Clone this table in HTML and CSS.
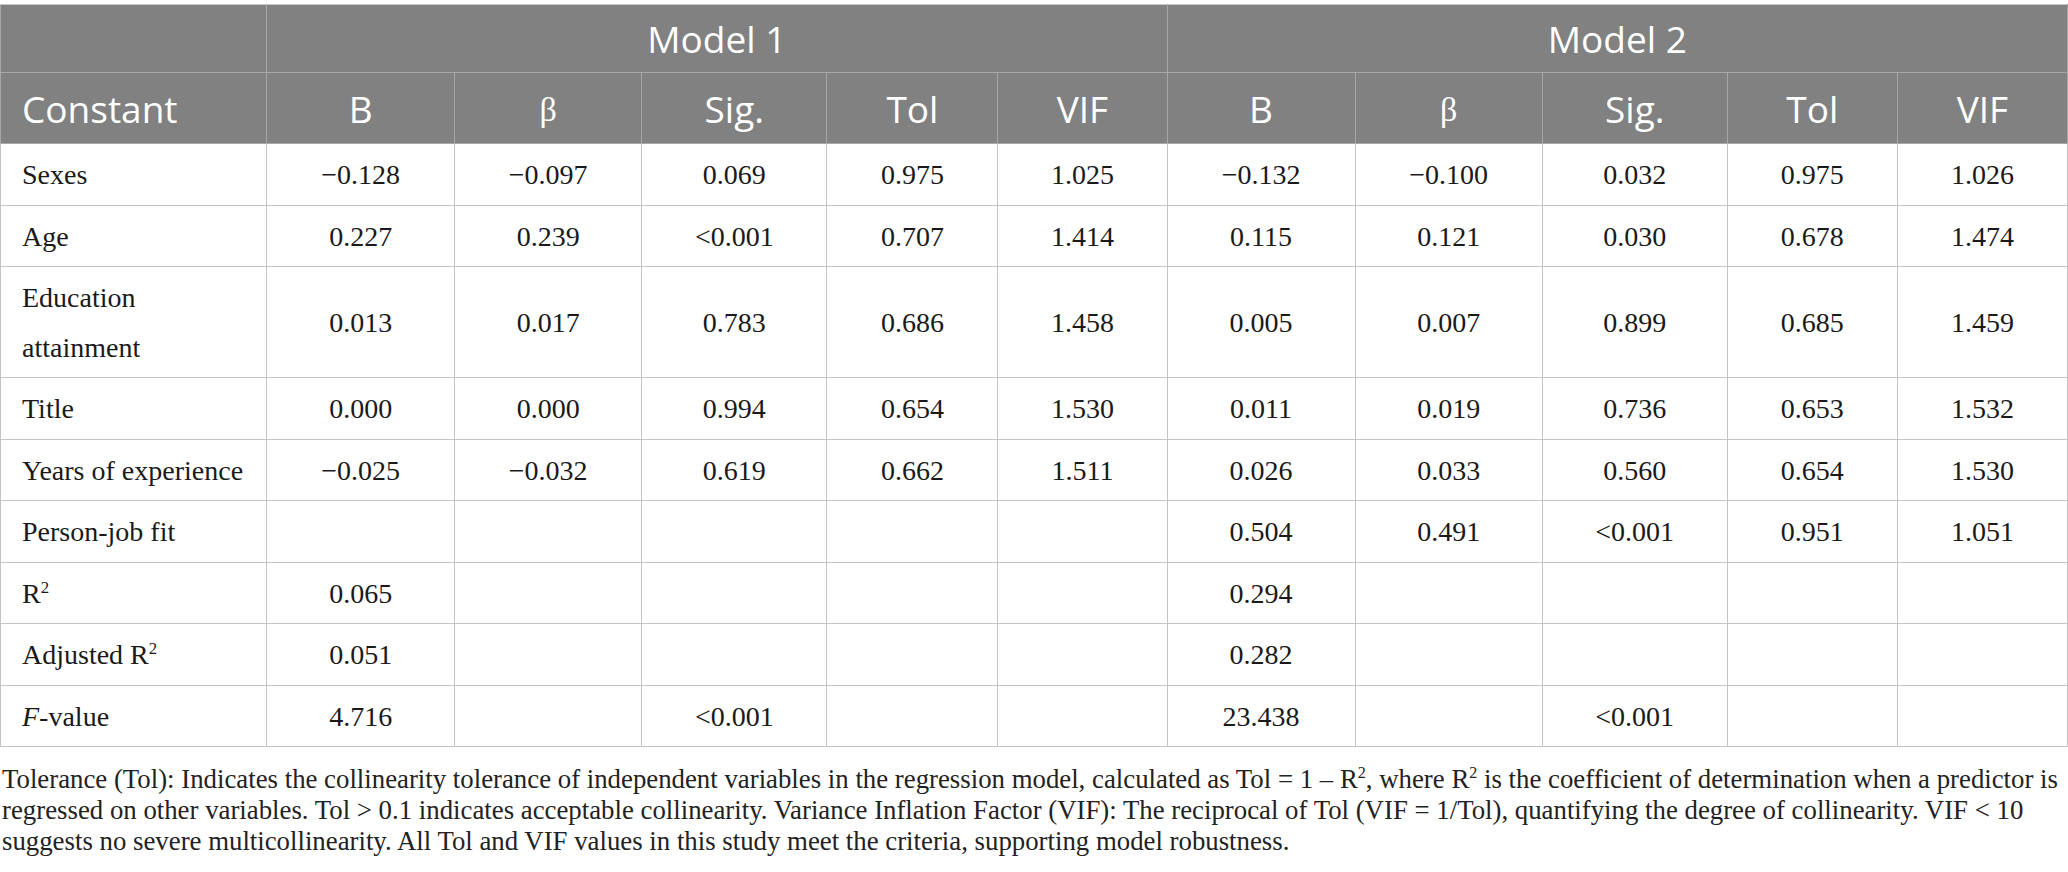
FILE: index.html
```html
<!DOCTYPE html>
<html lang="en">
<head>
<meta charset="utf-8">
<title>Regression table</title>
<link rel="stylesheet" href="styles.css">
</head>
<body>
<div class="page">
<table class="reg">
  <colgroup>
    <col class="c0">
    <col class="c1"><col class="c2"><col class="c3"><col class="c4"><col class="c5">
    <col class="c6"><col class="c7"><col class="c8"><col class="c9"><col class="c10">
  </colgroup>
  <thead>
    <tr class="hrow1">
      <th></th>
      <th colspan="5">Model 1</th>
      <th colspan="5">Model 2</th>
    </tr>
    <tr class="hrow2">
      <th class="first">Constant</th>
      <th>B</th><th><span class="greek">β</span></th><th>Sig.</th><th>Tol</th><th>VIF</th>
      <th>B</th><th><span class="greek">β</span></th><th>Sig.</th><th>Tol</th><th>VIF</th>
    </tr>
  </thead>
  <tbody>
    <tr><td>Sexes</td><td>−0.128</td><td>−0.097</td><td>0.069</td><td>0.975</td><td>1.025</td><td>−0.132</td><td>−0.100</td><td>0.032</td><td>0.975</td><td>1.026</td></tr>
    <tr><td>Age</td><td>0.227</td><td>0.239</td><td>&lt;0.001</td><td>0.707</td><td>1.414</td><td>0.115</td><td>0.121</td><td>0.030</td><td>0.678</td><td>1.474</td></tr>
    <tr><td>Education attainment</td><td>0.013</td><td>0.017</td><td>0.783</td><td>0.686</td><td>1.458</td><td>0.005</td><td>0.007</td><td>0.899</td><td>0.685</td><td>1.459</td></tr>
    <tr><td>Title</td><td>0.000</td><td>0.000</td><td>0.994</td><td>0.654</td><td>1.530</td><td>0.011</td><td>0.019</td><td>0.736</td><td>0.653</td><td>1.532</td></tr>
    <tr><td>Years of experience</td><td>−0.025</td><td>−0.032</td><td>0.619</td><td>0.662</td><td>1.511</td><td>0.026</td><td>0.033</td><td>0.560</td><td>0.654</td><td>1.530</td></tr>
    <tr><td>Person-job fit</td><td></td><td></td><td></td><td></td><td></td><td>0.504</td><td>0.491</td><td>&lt;0.001</td><td>0.951</td><td>1.051</td></tr>
    <tr><td>R<sup>2</sup></td><td>0.065</td><td></td><td></td><td></td><td></td><td>0.294</td><td></td><td></td><td></td><td></td></tr>
    <tr><td>Adjusted R<sup>2</sup></td><td>0.051</td><td></td><td></td><td></td><td></td><td>0.282</td><td></td><td></td><td></td><td></td></tr>
    <tr><td><i>F</i>-value</td><td>4.716</td><td></td><td>&lt;0.001</td><td></td><td></td><td>23.438</td><td></td><td>&lt;0.001</td><td></td><td></td></tr>
  </tbody>
</table>
<p class="note">Tolerance (Tol): Indicates the collinearity tolerance of independent variables in the regression model, calculated as Tol = 1 – R<sup>2</sup>, where R<sup>2</sup> is the coefficient of determination when a predictor is regressed on other variables. Tol &gt; 0.1 indicates acceptable collinearity. Variance Inflation Factor (VIF): The reciprocal of Tol (VIF = 1/Tol), quantifying the degree of collinearity. VIF &lt; 10 suggests no severe multicollinearity. All Tol and VIF values in this study meet the criteria, supporting model robustness.</p>
</div>
</body>
</html>
```

FILE: styles.css
```css
html, body {
  margin: 0;
  padding: 0;
  background: #ffffff;
}

.page {
  padding-top: 4px;
  width: 2068px;
}

.reg {
  width: 2068px;
  border-collapse: collapse;
  table-layout: fixed;
  font-family: "Liberation Serif", "Times New Roman", serif;
  font-size: 28px;
  color: #1a1a1a;
}

.c0 { width: 266px; }
.c1 { width: 188px; }
.c2 { width: 187px; }
.c3 { width: 185px; }
.c4 { width: 171px; }
.c5 { width: 169px; }
.c6 { width: 188px; }
.c7 { width: 187px; }
.c8 { width: 185px; }
.c9 { width: 170px; }
.c10 { width: 170px; }

.reg th {
  background: #808180;
  color: #ffffff;
  font-family: "Open Sans", "Liberation Sans", sans-serif;
  font-weight: 400;
  font-size: 37px;
  text-align: center;
  border: 1px solid #a6a7a6;
  padding: 4px 10px;
}

.reg .hrow1 th {
  border-top: 1px solid #c8c8c8;
  line-height: 59px;
}

.reg .hrow2 th {
  line-height: 59px;
}

.reg th.first {
  text-align: left;
  padding-left: 21px;
}

.reg .greek {
  font-family: "Liberation Serif", "Times New Roman", serif;
  font-size: 34px;
}

.reg td {
  border: 1px solid #c4c4c4;
  text-align: center;
  padding: 6px 10px 5px;
  line-height: 49.5px;
}

.reg td:first-child {
  text-align: left;
  padding-left: 21px;
  padding-right: 16px;
}

.reg sup {
  font-size: 60%;
  line-height: 0;
  vertical-align: 0.6em;
}

.note {
  margin: 17px 0 0 2px;
  font-family: "Liberation Serif", "Times New Roman", serif;
  font-size: 26.8px;
  line-height: 31px;
  color: #222222;
}

.note sup {
  font-size: 60%;
  line-height: 0;
  vertical-align: 0.6em;
}
```
